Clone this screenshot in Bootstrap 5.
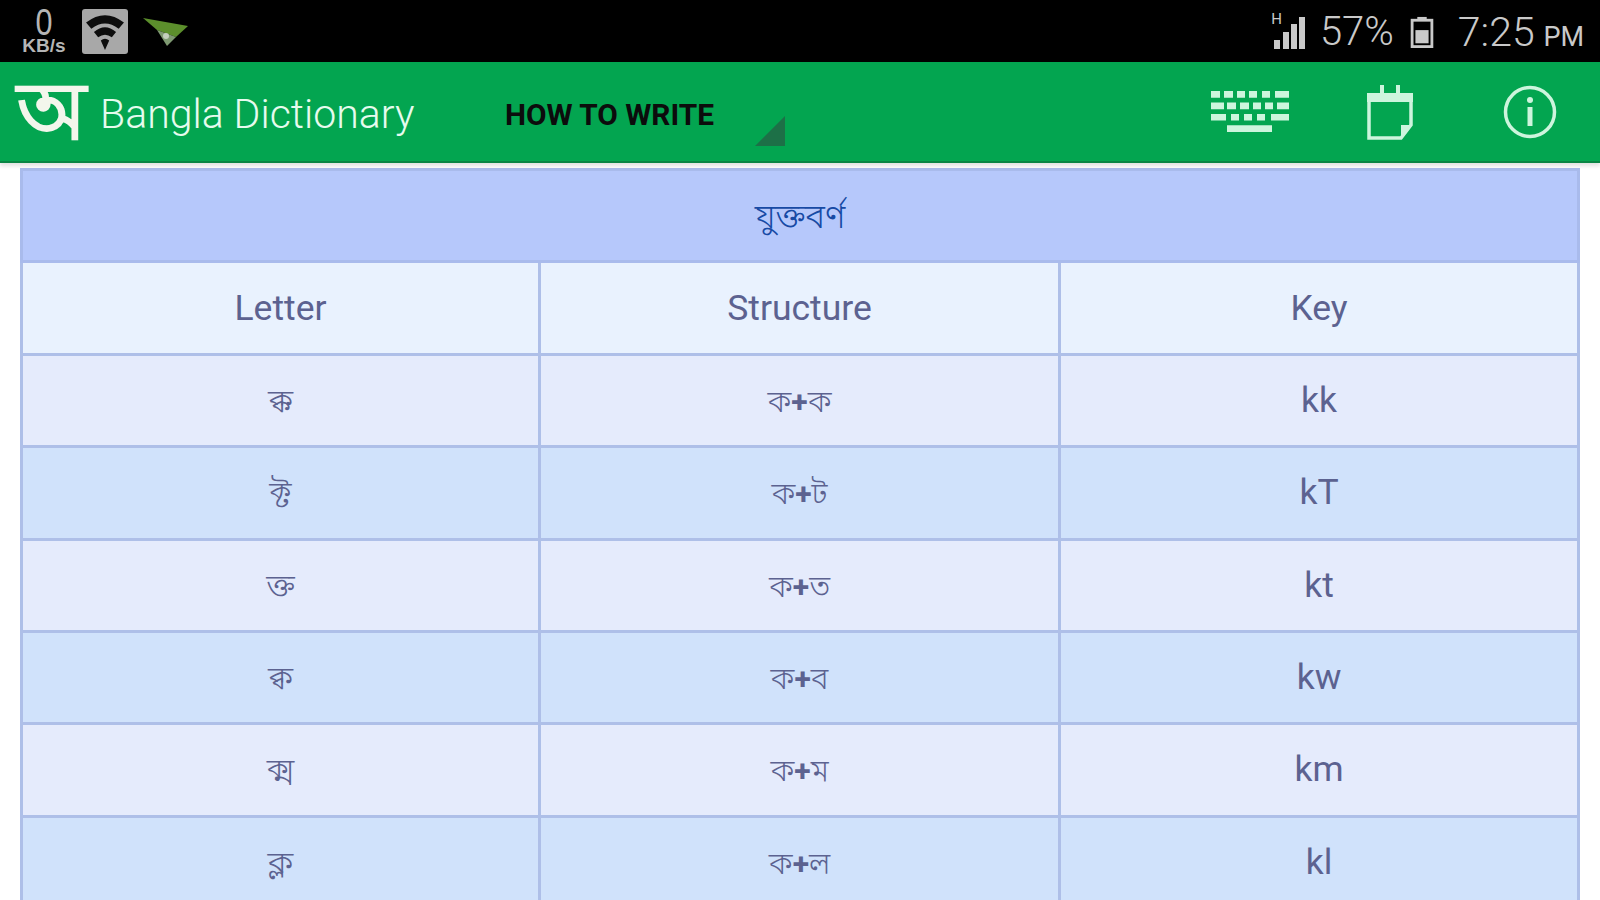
<!DOCTYPE html>
<html lang="bn">
<head>
    <meta charset="UTF-8">
    <meta name="viewport" content="width=device-width, initial-scale=1.0">
    <title>Bangla Dictionary</title>
    <link href="https://cdn.jsdelivr.net/npm/bootstrap@5.3.0/dist/css/bootstrap.min.css" rel="stylesheet">
    <style>
        html, body { height: 100%; overflow: hidden; background: #fff; }
        body { font-family: Roboto, "Noto Sans", sans-serif; }

        .status-bar { height: 62px; background: #000; color: #c9c9c9; padding: 0 16px 0 20px; }
        .speed { width: 48px; text-align: center; font-family: "Liberation Sans", sans-serif; color: #b5b5b5; }
        .speed b { display: block; font-size: 36px; font-weight: 400; height: 28px; line-height: 28px; transform: scaleX(.85); }
        .speed span { display: block; font-size: 19px; line-height: 17px; height: 17px; font-weight: 700; white-space: nowrap; }
        .wifi-box { width: 46px; height: 45px; margin-left: 14px; margin-top: 1px; background: #a8a8a8; border-radius: 3px; }
        .plane { margin-left: 15px; margin-top: 2px; }
        .status-right { align-self: stretch; padding-top: 2px; }
        .net-type { font-size: 15px; line-height: 1; align-self: flex-start; margin-top: 10px; margin-right: -9px; }
        .pct { font-size: 40px; font-weight: 300; margin-left: 15px; line-height: 1; }
        .clock { font-size: 41px; font-weight: 300; line-height: 1; margin-left: 24px; }
        .clock small { font-size: 27px; font-weight: 400; margin-left: 2px; }

        .app-bar { height: 101px; background: #03a550; border-bottom: 2px solid #098544; box-shadow: 0 3px 4px rgba(0,0,0,.12); position: relative; padding: 0 43px 0 14px; }
        .logo-letter { width: 74px; height: 92px; line-height: 92px; font-size: 80px; font-weight: 700; color: #f3f6ec; text-align: center; }
        .app-title { font-size: 41px; font-weight: 300; color: #e6fbee; margin-left: 12px; width: 405px; line-height: 1; white-space: nowrap; padding-top: 5px; }
        .tab-name { font-size: 29.8px; font-weight: 700; color: #0c0c0c; width: 250px; line-height: 1; white-space: nowrap; padding-top: 6px; }
        .tab-corner { width: 30px; height: 30px; align-self: flex-end; margin-bottom: 15px; background: #1d7047; clip-path: polygon(100% 0, 100% 100%, 0 100%); }
        .kb-icon { margin-right: 74px; }
        .note-icon { margin-right: 88px; margin-top: 2px; }

        .dict-wrap { padding: 5px 20px 0 20px; }
        .dict-table { width: 100%; table-layout: fixed; border-collapse: collapse; margin: 0; font-size: 35.5px; }
        .letter-col { width: 518px; }
        .structure-col { width: 520px; }
        .dict-table th, .dict-table td { height: 92.4px; padding: 0; border: 3px solid #aebfe8; text-align: center; vertical-align: middle; color: #5c6290; font-weight: 400; font-family: Roboto, "Noto Sans Bengali", "Lohit Bengali", "Noto Sans", sans-serif; line-height: 1; }
        .dict-table .title-row th { background: #b6c8fb; color: #174aa4; border-color: #a9bbec; font-size: 34px; font-weight: 300; }
        .dict-table .head-row th { background: #e9f2fe; padding-top: 2px; }
        .dict-table .odd-row td { background: #e5ebfc; }
        .dict-table .even-row td { background: #d0e2fb; }
        .bn-letter { font-size: 33px; font-weight: 300; }
        .bn-pair { font-size: 30px; font-weight: 300; }
        .bn-pair b { font-weight: 700; }
    </style>
</head>
<body>
    <!-- Status bar -->
    <div class="status-bar d-flex align-items-center">
        <div class="speed"><b>0</b><span>KB/s</span></div>
        <div class="wifi-box d-flex align-items-center justify-content-center">
            <svg width="40" height="40" viewBox="0 0 38 38">
                <path d="M1 10 Q19 -4 37 10 L32 16 Q19 6 6 16 Z M8.500 19 Q19 10 29.500 19 L25.500 24 Q19 19 12.500 24 Z M15 27 Q19 24 23 27 L19 36 Z" fill="#0d0d0d"/>
            </svg>
        </div>
        <svg class="plane" width="46" height="30" viewBox="0 0 46 30">
            <path d="M0 1 L45 9 L33 20 L14 13 Z" fill="#5c8f2c"/>
            <path d="M14 13 L33 20 L24 29 Z" fill="#7f9a72"/>
            <circle cx="23" cy="19" r="3" fill="#c4cfbd"/>
        </svg>
        <div class="status-right ms-auto d-flex align-items-center">
            <span class="net-type">H</span>
            <svg width="32" height="36" viewBox="0 0 32 36">
                <path d="M1 26h6v9h-6z M10 18h6v17h-6z M18 10h6v25h-6z M26 3h6v32h-6z" fill="#c9c9c9"/>
            </svg>
            <span class="pct">57%</span>
            <svg width="24" height="32" viewBox="0 0 24 34" class="ms-3">
                <path d="M7 1h10v3h-10z" fill="#c9c9c9"/>
                <rect x="1.500" y="4.500" width="21" height="28" fill="none" stroke="#c9c9c9" stroke-width="3"/>
                <rect x="5" y="15" width="14" height="14" fill="#c9c9c9"/>
            </svg>
            <span class="clock">7:25<small> PM</small></span>
        </div>
    </div>

    <!-- Action bar -->
    <div class="app-bar d-flex align-items-center">
        <span class="logo-letter">অ</span>
        <span class="app-title">Bangla Dictionary</span>
        <span class="tab-name">HOW TO WRITE</span>
        <span class="tab-corner"></span>
        <div class="ms-auto d-flex align-items-center">
            <svg class="kb-icon" width="80" height="42" viewBox="0 0 80 44" preserveAspectRatio="none" fill="#cdf5dd">
                <path d="M0 0h9v7h-9z M13 0h9v7h-9z M26 0h8v7h-8z M38 0h8v7h-8z M51 0h8v7h-8z M64 0h14v7h-14z"/>
                <path d="M0 12h13v7h-13z M16 12h9v7h-9z M29 12h9v7h-9z M42 12h8v7h-8z M54 12h8v7h-8z M66 12h12v7h-12z"/>
                <path d="M0 24h15v7h-15z M20 24h8v7h-8z M33 24h8v7h-8z M46 24h8v7h-8z M60 24h18v7h-18z"/>
                <path d="M16 36h45v7h-45z"/>
            </svg>
            <svg class="note-icon" width="50" height="56" viewBox="0 0 50 56">
                <path d="M15 0h4v8h-4z M31 0h4v8h-4z M2 8h46v9h-46z" fill="#cdf5dd"/>
                <path d="M4 15v38h32l10 -13v-25" fill="none" stroke="#cdf5dd" stroke-width="3.500"/>
                <path d="M36 53v-13h10z" fill="#cdf5dd"/>
            </svg>
            <svg width="54" height="54" viewBox="0 0 54 54">
                <circle cx="27" cy="27" r="24.500" fill="none" stroke="#cdf5dd" stroke-width="3.500"/>
                <circle cx="27" cy="15" r="3" fill="#cdf5dd"/>
                <path d="M24.500 22h5v19h-5z" fill="#cdf5dd"/>
            </svg>
        </div>
    </div>

    <!-- Table -->
    <div class="dict-wrap">
        <table class="dict-table">
            <colgroup><col class="letter-col"><col class="structure-col"><col></colgroup>
            <thead>
                <tr class="title-row"><th colspan="3">যুক্তবর্ণ</th></tr>
                <tr class="head-row"><th>Letter</th><th>Structure</th><th>Key</th></tr>
            </thead>
            <tbody>
                <tr class="odd-row"><td><span class="bn-letter">ক্ক</span></td><td><span class="bn-pair">ক<b>+</b>ক</span></td><td>kk</td></tr>
                <tr class="even-row"><td><span class="bn-letter">ক্ট</span></td><td><span class="bn-pair">ক<b>+</b>ট</span></td><td>kT</td></tr>
                <tr class="odd-row"><td><span class="bn-letter">ক্ত</span></td><td><span class="bn-pair">ক<b>+</b>ত</span></td><td>kt</td></tr>
                <tr class="even-row"><td><span class="bn-letter">ক্ব</span></td><td><span class="bn-pair">ক<b>+</b>ব</span></td><td>kw</td></tr>
                <tr class="odd-row"><td><span class="bn-letter">ক্ম</span></td><td><span class="bn-pair">ক<b>+</b>ম</span></td><td>km</td></tr>
                <tr class="even-row"><td><span class="bn-letter">ক্ল</span></td><td><span class="bn-pair">ক<b>+</b>ল</span></td><td>kl</td></tr>
            </tbody>
        </table>
    </div>

    <script src="https://cdn.jsdelivr.net/npm/bootstrap@5.3.0/dist/js/bootstrap.bundle.min.js"></script>
</body>
</html>
